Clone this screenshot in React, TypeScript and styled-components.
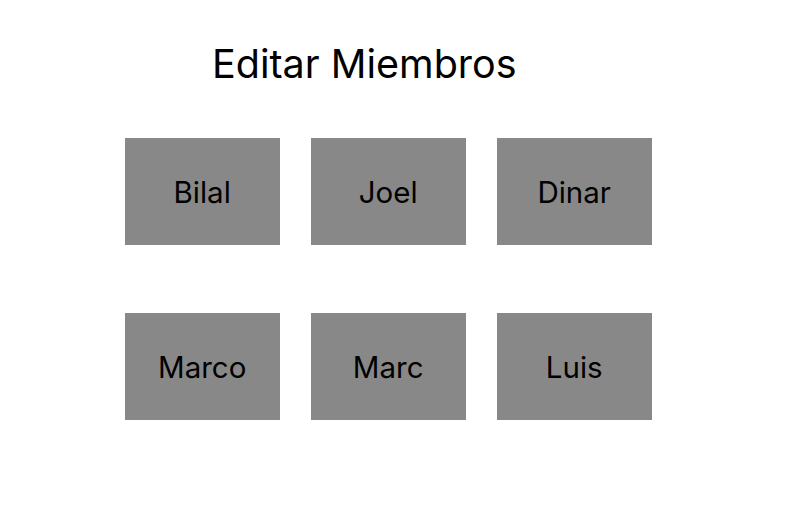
import React from "react";
import styled, { createGlobalStyle } from "styled-components";

const GlobalStyle = createGlobalStyle`
  body {
    margin: 0;
    background: #ffffff;
    font-family: Inter, "Noto Sans", sans-serif;
    color: #000000;
  }
`;

const Page = styled.div`
  display: flex;
  flex-direction: column;
  padding: 40px 0 0 0;
`;

const Title = styled.h1`
  margin: 0 0 0 212px;
  font-size: 39.5px;
  line-height: 48px;
  font-weight: 400;
`;

const MemberGrid = styled.div`
  display: grid;
  grid-template-columns: repeat(3, 155px);
  grid-auto-rows: 107px;
  column-gap: 31px;
  row-gap: 68px;
  margin: 49.5px 0 0 124.7px;
`;

const MemberCard = styled.button`
  display: flex;
  align-items: center;
  justify-content: center;
  padding: 1px 0 0 0;
  border: none;
  background: #888888;
  font-family: Inter, "Noto Sans", sans-serif;
  font-size: 29.5px;
  color: #000000;
  cursor: pointer;
`;

const members = ["Bilal", "Joel", "Dinar", "Marco", "Marc", "Luis"];

export default function App() {
  return (
    <>
      <GlobalStyle />
      <Page>
        <Title>Editar Miembros</Title>
        <MemberGrid>
          {members.map((name) => (
            <MemberCard key={name}>{name}</MemberCard>
          ))}
        </MemberGrid>
      </Page>
    </>
  );
}
